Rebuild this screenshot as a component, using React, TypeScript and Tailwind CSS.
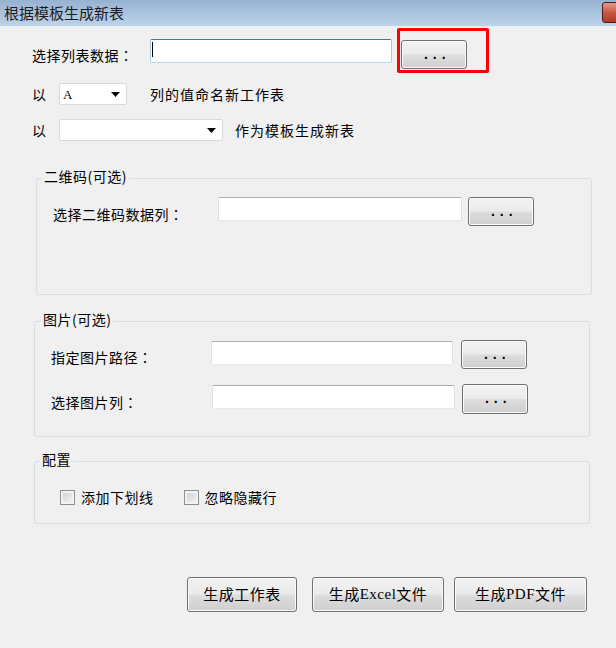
const FONT = "font-['Noto_Sans_CJK_SC','Noto_Sans',sans-serif]";
const BTN =
  "flex items-center justify-center rounded-[3px] border border-[#707070] bg-[linear-gradient(to_bottom,#f2f2f2_0%,#ebebeb_48%,#dddddd_52%,#cfcfcf_100%)] shadow-[inset_0_0_0_1px_#fbfbfb]";
const INPUT = "h-[24px] rounded-[2px] border border-t-[#abadb3] border-x-[#dbdfe6] border-b-[#e3e9ef] bg-white";
const GROUP = "rounded-[3px] border border-[#d5dfe5]";
const LBL = "text-[14px] leading-[16px] tracking-[0.5px] whitespace-nowrap";
const LEGEND = "relative top-[-2px] px-[2px] text-[14px] leading-[16px] tracking-[0.5px] whitespace-nowrap";

// full-width colon sits centred in its cell, as in the original dialog font
function Colon() {
  return <span className="font-['Noto_Sans_CJK_TC',sans-serif]">：</span>;
}

function Dots() {
  return <span className="pl-[2px] font-['Liberation_Mono',monospace] text-[14px] font-bold leading-none tracking-[0.5px]">...</span>;
}

function Latin({ children }: { children: string }) {
  return <span className="font-['Liberation_Serif',serif]">{children}</span>;
}

function Combo({ width, value }: { width: string; value?: string }) {
  return (
    <div className={`flex h-[22px] items-center justify-between rounded-[2px] border border-[#d9d9d9] bg-white pl-[3px] pr-[6px] ${width}`}>
      <span className="font-['Liberation_Serif',serif] text-[13px] leading-none">{value}</span>
      <svg width="9" height="5" viewBox="0 0 9 5">
        <polygon points="0,0 9,0 4.5,5" fill="#000" />
      </svg>
    </div>
  );
}

function Check({ label, className }: { label: string; className?: string }) {
  return (
    <div className={`flex items-center ${className ?? ""}`}>
      <span className="size-[15px] border border-[#8e8f8f] bg-[linear-gradient(135deg,#c9ccd1,#f7f7f7)] shadow-[inset_0_0_0_2px_#f2f2f2]" />
      <span className={`ml-[6px] ${LBL}`}>{label}</span>
    </div>
  );
}

export default function App() {
  return (
    <div className={`relative h-[648px] w-[616px] overflow-hidden bg-[#f0f0f0] text-black ${FONT}`}>
      {/* title bar */}
      <div className="relative flex h-[26px] items-center bg-[linear-gradient(to_bottom,#97b2d1,#bcd3eb)] pl-[4px]">
        <span className="text-[15px] leading-[18px] text-[#1c1c1c]">根据模板生成新表</span>
        <div className="absolute left-[602px] top-[2px] h-[21px] w-[43px] rounded-[3px] border border-[#4e1c1c] bg-[linear-gradient(to_bottom,#e59a8c,#c9583f_50%,#b23a26)]" />
      </div>

      {/* row 1 */}
      <div className="ml-[32px] mt-[13px] flex h-[30px] items-start">
        <span className={`mt-[8px] w-[118px] ${LBL}`}>
          选择列表数据<Colon />
        </span>
        <div className="flex h-[24px] w-[242px] items-start rounded-[2px] border border-t-[#3d7bad] border-x-[#a4c9e3] border-b-[#b7d9ed] bg-white pl-[1px] pt-[2px]">
          <span className="h-[15px] w-px bg-black" />
        </div>
        <div className="relative ml-[9px] mt-[1px]">
          <div className={`h-[29px] w-[66px] ${BTN}`}>
            <Dots />
          </div>
          <div className="absolute left-[-4px] top-[-12px] h-[45px] w-[92px] rounded-[2px] border-[3px] border-[#ff0000]" />
        </div>
      </div>

      {/* row 2 */}
      <div className="ml-[32px] mt-[14px] flex h-[22px] items-center">
        <span className={`w-[27px] ${LBL}`}>以</span>
        <Combo width="w-[68px]" value="A" />
        <span className={`ml-[23px] ${LBL} tracking-[1px]`}>列的值命名新工作表</span>
      </div>

      {/* row 3 */}
      <div className="ml-[32px] mt-[14px] flex h-[22px] items-center">
        <span className={`w-[27px] ${LBL}`}>以</span>
        <Combo width="w-[164px]" />
        <span className={`ml-[12px] ${LBL} tracking-[1px]`}>作为模板生成新表</span>
      </div>

      {/* 二维码 */}
      <fieldset className={`ml-[36px] mt-[29px] h-[125px] w-[556px] ${GROUP}`}>
        <legend className={`ml-[5px] ${LEGEND}`}>二维码(可选)</legend>
        <div className="ml-[16px] mt-[11px] flex items-start">
          <span className={`mt-[9px] w-[165px] ${LBL}`}>
            选择二维码数据列<Colon />
          </span>
          <div className={`w-[244px] ${INPUT}`} />
          <div className={`ml-[6px] h-[29px] w-[66px] ${BTN}`}>
            <Dots />
          </div>
        </div>
      </fieldset>

      {/* 图片 */}
      <fieldset className={`ml-[34px] mt-[18px] h-[124px] w-[556px] ${GROUP}`}>
        <legend className={`ml-[6px] ${LEGEND}`}>图片(可选)</legend>
        <div className="ml-[16px] mt-[11px] flex items-start">
          <span className={`mt-[9px] w-[160px] ${LBL}`}>
            指定图片路径<Colon />
          </span>
          <div className={`mt-[1px] w-[242px] ${INPUT}`} />
          <div className={`ml-[8px] h-[29px] w-[66px] ${BTN}`}>
            <Dots />
          </div>
        </div>
        <div className="ml-[16px] mt-[15px] flex items-start">
          <span className={`mt-[10px] w-[161px] ${LBL}`}>
            选择图片列<Colon />
          </span>
          <div className={`mt-[1px] w-[243px] ${INPUT}`} />
          <div className={`ml-[7px] h-[30px] w-[66px] ${BTN}`}>
            <Dots />
          </div>
        </div>
      </fieldset>

      {/* 配置 */}
      <fieldset className={`ml-[34px] mt-[16px] h-[71px] w-[556px] ${GROUP}`}>
        <legend className={`ml-[5px] ${LEGEND}`}>配置</legend>
        <div className="ml-[25px] mt-[20px] flex items-center">
          <Check label="添加下划线" />
          <Check label="忽略隐藏行" className="ml-[30px]" />
        </div>
      </fieldset>

      {/* actions */}
      <div className="ml-[187px] mt-[53px] flex">
        <button className={`h-[35px] w-[110px] pb-[2px] text-[15px] leading-[18px] tracking-[0.5px] ${BTN}`}>生成工作表</button>
        <button className={`ml-[15px] h-[35px] w-[132px] pb-[2px] text-[15px] leading-[18px] tracking-[0.5px] ${BTN}`}>
          生成<Latin>Excel</Latin>文件
        </button>
        <button className={`ml-[10px] h-[35px] w-[133px] pb-[2px] text-[15px] leading-[18px] tracking-[0.5px] ${BTN}`}>
          生成<Latin>PDF</Latin>文件
        </button>
      </div>
    </div>
  );
}
